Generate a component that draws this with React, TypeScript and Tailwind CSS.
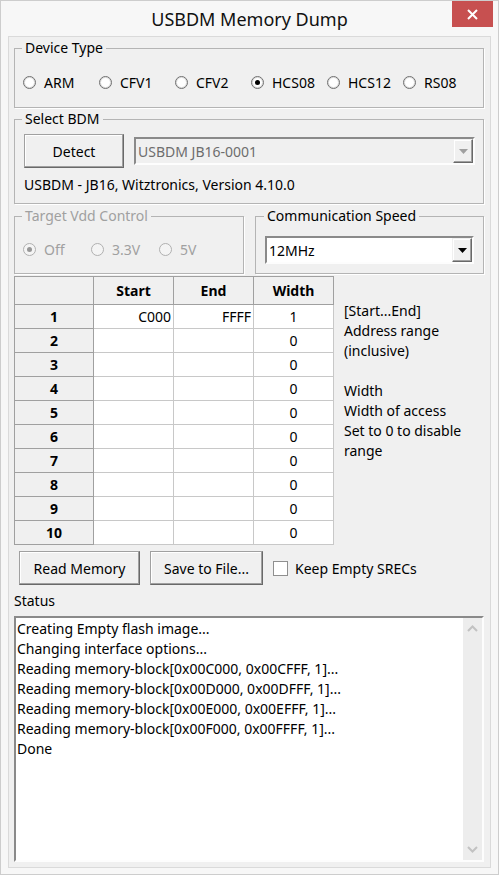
import type { ReactNode } from 'react';

const statusLines = [
  'Creating Empty flash image...',
  'Changing interface options...',
  'Reading memory-block[0x00C000, 0x00CFFF, 1]...',
  'Reading memory-block[0x00D000, 0x00DFFF, 1]...',
  'Reading memory-block[0x00E000, 0x00EFFF, 1]...',
  'Reading memory-block[0x00F000, 0x00FFFF, 1]...',
  'Done',
];

const ranges = [
  { n: 1, start: 'C000', end: 'FFFF', width: '1' },
  { n: 2, start: '', end: '', width: '0' },
  { n: 3, start: '', end: '', width: '0' },
  { n: 4, start: '', end: '', width: '0' },
  { n: 5, start: '', end: '', width: '0' },
  { n: 6, start: '', end: '', width: '0' },
  { n: 7, start: '', end: '', width: '0' },
  { n: 8, start: '', end: '', width: '0' },
  { n: 9, start: '', end: '', width: '0' },
  { n: 10, start: '', end: '', width: '0' },
];

function Radio({ label, checked, disabled, width }: { label: string; checked?: boolean; disabled?: boolean; width: string }) {
  return (
    <label className={`flex h-[20px] items-center gap-[8px] ${width} ${disabled ? 'text-[#a0a0a0]' : 'text-black'}`}>
      <span
        className={`flex h-[13px] w-[13px] shrink-0 items-center justify-center rounded-full border ${
          disabled ? 'border-[#b0b0b0] bg-[#f4f4f4]' : 'border-[#6f6f6f] bg-white shadow-[inset_0_0_0_1px_#dcdcdc]'
        }`}
      >
        {checked ? <span className={`h-[5px] w-[5px] rounded-full ${disabled ? 'bg-[#979797]' : 'bg-black'}`} /> : null}
      </span>
      <span>{label}</span>
    </label>
  );
}

function Group({ title, disabled, className, children }: { title: string; disabled?: boolean; className?: string; children: ReactNode }) {
  return (
    <fieldset className={`border border-[#b4b4b4] pl-[8px] shadow-[1px_1px_0_#ffffff] ${className ?? ''}`}>
      <legend className={`-ml-[1px] px-[3px] leading-[20px] ${disabled ? 'text-[#a0a0a0]' : 'text-black'}`}>{title}</legend>
      {children}
    </fieldset>
  );
}

function Button({ children, className }: { children: ReactNode; className?: string }) {
  return (
    <button
      type="button"
      className={`flex h-[34px] items-center justify-center border border-[#a0a0a0] border-r-[#696969] border-b-[#696969] bg-[#f0f0f0] text-black shadow-[inset_-1px_-1px_0_#a0a0a0,inset_1px_1px_0_#ffffff] ${className ?? ''}`}
    >
      {children}
    </button>
  );
}

function Arrow({ disabled }: { disabled?: boolean }) {
  return (
    <span className="flex h-full w-[20px] items-center justify-center border border-[#f0f0f0] border-r-[#696969] border-b-[#696969] bg-[#f0f0f0] shadow-[inset_-1px_-1px_0_#a0a0a0,inset_1px_1px_0_#ffffff]">
      <svg width="9" height="5" viewBox="0 0 9 5">
        <path d="M0 0h9L4.5 5z" fill={disabled ? '#a0a0a0' : '#000'} />
      </svg>
    </span>
  );
}

function Combo({ value, disabled, className }: { value: string; disabled?: boolean; className?: string }) {
  return (
    <div
      className={`flex h-[28px] items-stretch border-2 border-[#8a8a8a] border-r-[#fdfdfd] border-b-[#fdfdfd] ${
        disabled ? 'bg-[#f0f0f0] text-[#6d6d6d]' : 'bg-white text-black'
      } ${className ?? ''}`}
    >
      <span className="flex flex-1 items-center pl-[2px]">{value}</span>
      <Arrow disabled={disabled} />
    </div>
  );
}

function Chevron({ up }: { up?: boolean }) {
  return (
    <svg width="11" height="7" viewBox="0 0 11 7">
      <path d={up ? 'M1 6l4.5-4.5L10 6' : 'M1 1l4.5 4.5L10 1'} fill="none" stroke="#c2c2c2" strokeWidth="2" />
    </svg>
  );
}

export default function App() {
  return (
    <div className="flex h-[875px] w-[499px] flex-col border border-[#cdcdcd] bg-[#f7f7f7] font-['Noto_Sans',sans-serif] text-[14px] text-black">
      <div className="relative flex h-[35px] shrink-0 items-center justify-center">
        <span className="pt-[2px] text-[18px] text-[#111]">USBDM Memory Dump</span>
        <button
          type="button"
          aria-label="Close"
          className="absolute top-0 right-[5px] flex h-[26px] w-[41px] items-center justify-center bg-[#c75050]"
        >
          <svg width="11" height="11" viewBox="0 0 11 11">
            <path d="M1 1l9 9M10 1l-9 9" stroke="#fff" strokeWidth="2" />
          </svg>
        </button>
      </div>

      <div className="mx-[7px] flex h-[832px] flex-col border border-[#dadada] bg-[#f0f0f0] pt-[1px] pr-[6px] pb-[5px] pl-[5px]">
        <Group title="Device Type" className="pb-[15px]">
          <div className="mt-[14px] flex">
            <Radio label="ARM" width="w-[76px]" />
            <Radio label="CFV1" width="w-[76px]" />
            <Radio label="CFV2" width="w-[76px]" />
            <Radio label="HCS08" width="w-[76px]" checked />
            <Radio label="HCS12" width="w-[76px]" />
            <Radio label="RS08" width="w-[76px]" />
          </div>
        </Group>

        <Group title="Select BDM" className="mt-[1px] pr-[8px] pb-[8px]">
          <div className="mt-[5px] flex items-center gap-[10px]">
            <Button className="ml-[1px] w-[100px]">Detect</Button>
            <Combo value="USBDM JB16-0001" disabled className="flex-1" />
          </div>
          <p className="mt-[7px] ml-[1px] leading-[20px]">USBDM - JB16, Witztronics, Version 4.10.0</p>
        </Group>

        <div className="mt-[2px] flex gap-[11px]">
          <Group title="Target Vdd Control" disabled className="w-[230px] pb-[14px]">
            <div className="mt-[13px] flex">
              <Radio label="Off" width="w-[68px]" checked disabled />
              <Radio label="3.3V" width="w-[68px]" disabled />
              <Radio label="5V" width="w-[68px]" disabled />
            </div>
          </Group>
          <Group title="Communication Speed" className="flex-1 pr-[9px] pb-[9px] pl-[9px]">
            <Combo value="12MHz" className="mt-[10px]" />
          </Group>
        </div>

        <div className="mt-[2px] flex">
          <div className="grid w-[320px] grid-cols-[79px_80px_80px_80px] border-t border-l border-[#a0a0a0] bg-white">
            <div className="h-[28px] border-r border-b border-[#a0a0a0] bg-[#f0f0f0]" />
            {['Start', 'End', 'Width'].map((h) => (
              <div
                key={h}
                className="flex h-[28px] items-center justify-center border-r border-b border-[#a0a0a0] bg-[#f0f0f0] font-bold"
              >
                {h}
              </div>
            ))}
            {ranges.map((r) => (
              <div key={r.n} className="contents">
                <div className="flex h-[24px] items-center justify-center border-r border-b border-[#a0a0a0] bg-[#f0f0f0] font-bold">
                  {r.n}
                </div>
                <div className="flex h-[24px] items-center justify-end border-r border-b border-[#c8c8c8] pr-[2px]">{r.start}</div>
                <div className="flex h-[24px] items-center justify-end border-r border-b border-[#c8c8c8] pr-[2px]">{r.end}</div>
                <div className="flex h-[24px] items-center justify-center border-r border-b border-[#c8c8c8]">{r.width}</div>
              </div>
            ))}
          </div>
          <div className="mt-[25px] ml-[10px] leading-[20px]">
            <p>[Start...End]</p>
            <p>Address range</p>
            <p>(inclusive)</p>
            <p className="mt-[20px]">Width</p>
            <p>Width of access</p>
            <p>Set to 0 to disable</p>
            <p>range</p>
          </div>
        </div>

        <div className="mt-[6px] flex items-center">
          <Button className="ml-[5px] w-[121px]">Read Memory</Button>
          <Button className="ml-[10px] w-[113px]">Save to File...</Button>
          <label className="ml-[10px] flex items-center gap-[7px]">
            <span className="h-[15px] w-[15px] border border-[#8f8f8f] bg-white" />
            <span>Keep Empty SRECs</span>
          </label>
        </div>

        <p className="mt-[6px] leading-[20px]">Status</p>

        <div className="mt-[5px] flex h-[246px] border-2 border-[#8a8a8a] border-r-[#fdfdfd] border-b-[#fdfdfd] bg-white">
          <div className="flex-1 pt-[1px] pl-[1px] leading-[20px]">
            {statusLines.map((l) => (
              <p key={l}>{l}</p>
            ))}
          </div>
          <div className="flex w-[19px] flex-col items-center justify-between bg-[#ededed] py-[7px]">
            <Chevron up />
            <Chevron />
          </div>
        </div>
      </div>
    </div>
  );
}
